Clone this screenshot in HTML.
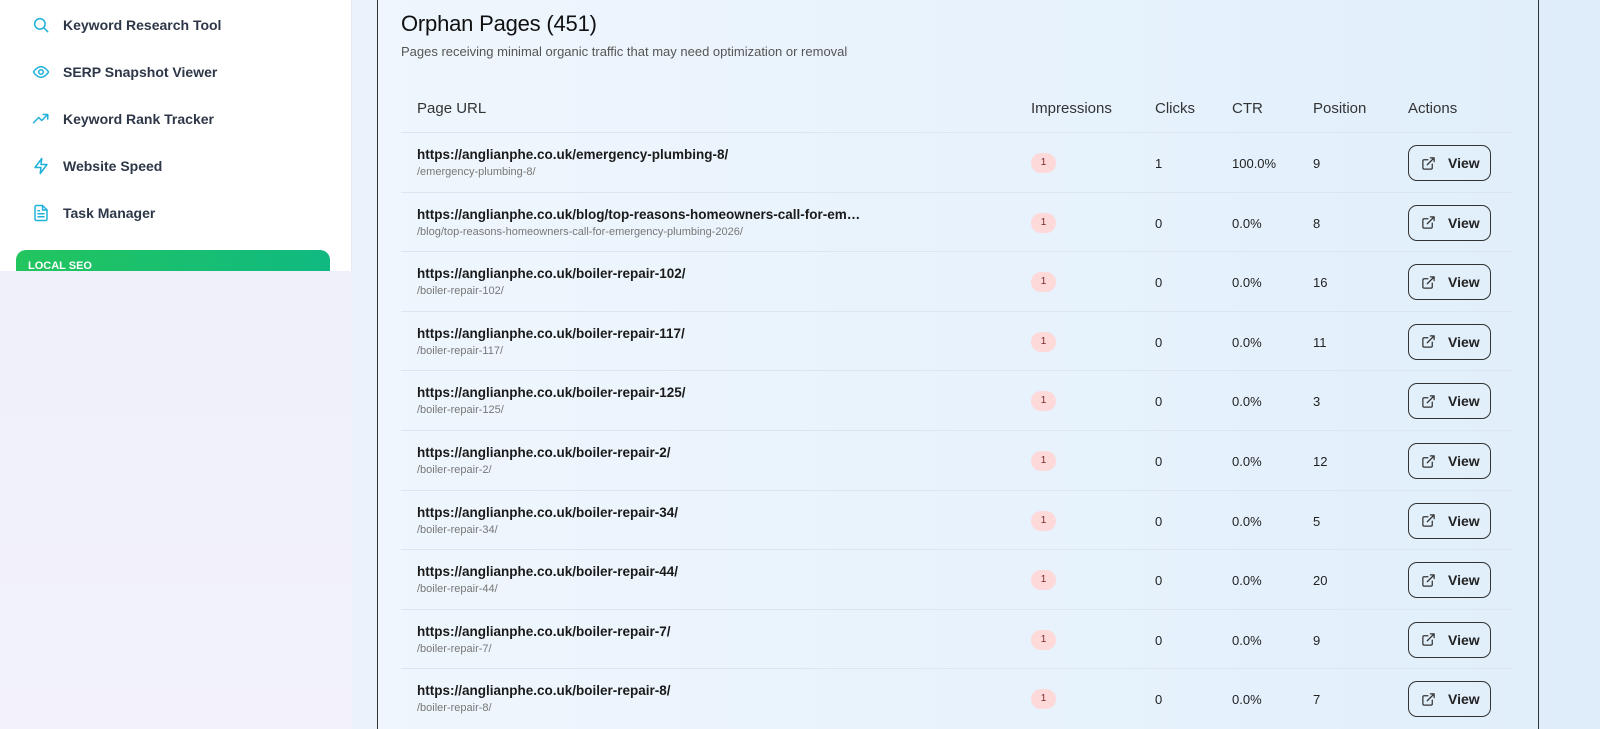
<!DOCTYPE html>
<html><head><style>
*{margin:0;padding:0;box-sizing:border-box}
html,body{width:1600px;height:729px;overflow:hidden}
body{font-family:"Liberation Sans",sans-serif;background:linear-gradient(90deg,#eef4fc,#dfecf9);position:relative}
.side{position:absolute;left:0;top:0;width:352px;height:271px;background:#fff;border-right:1px solid #e6e9f0}
.sideb{position:absolute;left:0;top:271px;width:352px;height:458px;background:linear-gradient(180deg,#eff0fa,#f3f2fa)}
.nav{position:absolute;left:32px;display:flex;align-items:center;gap:13px;font-size:14px;font-weight:bold;color:#2d3748}
.nav svg{width:18px;height:18px;fill:none;stroke:#1fb1d9;stroke-width:2;stroke-linecap:round;stroke-linejoin:round}
.local{position:absolute;left:16px;top:250px;width:314px;height:21px;border-radius:10px 10px 0 0;background:linear-gradient(90deg,#22c55e,#10b981);color:#fff;font-size:11px;font-weight:bold;padding:11px 0 0 12px;overflow:hidden;line-height:10px}
.card{position:absolute;left:377px;top:-5px;width:1162px;height:745px;border:1.5px solid #333;border-top:none;border-bottom:none;background:linear-gradient(90deg,#eff6fd,#e1effb)}
h1{position:absolute;left:401px;top:11px;font-size:22px;font-weight:normal;color:#111;letter-spacing:-.2px}
.sub{position:absolute;left:401px;top:44px;font-size:13px;color:#555}
.th{position:absolute;top:100px;font-size:15px;color:#333}
.hr{position:absolute;left:401px;width:1111px;height:1px;background:#dde6f0}
.url{position:absolute;left:417px;font-size:13.5px;font-weight:bold;color:#1a1a1a}
.path{position:absolute;left:417px;font-size:11px;color:#777}
.badge{position:absolute;left:1031px;width:25px;height:20px;border-radius:10px;background:#fdd9d9;color:#7a2a2a;font-size:10px;text-align:center;line-height:20px}
.c{position:absolute;font-size:13px;color:#222}
.btn{position:absolute;left:1408px;width:83px;height:36px;border:1px solid #333;border-radius:9px;font-size:14px;font-weight:bold;color:#222;display:flex;align-items:center;padding-left:12px;gap:12px}
.btn svg{width:15px;height:15px;fill:none;stroke:#333;stroke-width:2;stroke-linecap:round;stroke-linejoin:round}
</style></head><body>
<div class="side"></div><div class="sideb"></div>
<div class="nav" style="top:16px"><svg viewBox="0 0 24 24"><circle cx="10.5" cy="10.5" r="7"/><path d="M16 16l5 5"/></svg>Keyword Research Tool</div>
<div class="nav" style="top:63px"><svg viewBox="0 0 24 24"><path d="M2 12s4-7 10-7 10 7 10 7-4 7-10 7S2 12 2 12z"/><circle cx="12" cy="12" r="3"/></svg>SERP Snapshot Viewer</div>
<div class="nav" style="top:110px"><svg viewBox="0 0 24 24"><path d="M2 17l7-7 4 4 8-8M15 6h6v6"/></svg>Keyword Rank Tracker</div>
<div class="nav" style="top:157px"><svg viewBox="0 0 24 24"><path d="M13 2L4 14h8l-1 8 9-12h-8z"/></svg>Website Speed</div>
<div class="nav" style="top:204px"><svg viewBox="0 0 24 24"><path d="M14 2H6a2 2 0 0 0-2 2v16a2 2 0 0 0 2 2h12a2 2 0 0 0 2-2V8z"/><path d="M14 2v6h6M8 13h8M8 17h8M8 9h2"/></svg>Task Manager</div>
<div class="local">LOCAL SEO</div>
<div class="card"></div>
<h1>Orphan Pages (451)</h1>
<div class="sub">Pages receiving minimal organic traffic that may need optimization or removal</div>
<div class="th" style="left:417px">Page URL</div>
<div class="th" style="left:1031px">Impressions</div>
<div class="th" style="left:1155px">Clicks</div>
<div class="th" style="left:1232px">CTR</div>
<div class="th" style="left:1313px">Position</div>
<div class="th" style="left:1408px">Actions</div>
<div id="rows"></div>
<script>
var d=[["emergency-plumbing-8/","/emergency-plumbing-8/","1","100.0%","9"],
["blog/top-reasons-homeowners-call-for-em…","/blog/top-reasons-homeowners-call-for-emergency-plumbing-2026/","0","0.0%","8"],
["boiler-repair-102/","/boiler-repair-102/","0","0.0%","16"],
["boiler-repair-117/","/boiler-repair-117/","0","0.0%","11"],
["boiler-repair-125/","/boiler-repair-125/","0","0.0%","3"],
["boiler-repair-2/","/boiler-repair-2/","0","0.0%","12"],
["boiler-repair-34/","/boiler-repair-34/","0","0.0%","5"],
["boiler-repair-44/","/boiler-repair-44/","0","0.0%","20"],
["boiler-repair-7/","/boiler-repair-7/","0","0.0%","9"],
["boiler-repair-8/","/boiler-repair-8/","0","0.0%","7"]];
var h='';
d.forEach(function(r,i){var y=163+i*59.6;
h+='<div class="hr" style="top:'+(y-31)+'px"></div>';
h+='<div class="url" style="top:'+(y-16)+'px">https://anglianphe.co.uk/'+r[0]+'</div>';
h+='<div class="path" style="top:'+(y+3)+'px">'+r[1]+'</div>';
h+='<div class="badge" style="top:'+(y-10)+'px">1</div>';
h+='<div class="c" style="left:1155px;top:'+(y-7)+'px">'+r[2]+'</div>';
h+='<div class="c" style="left:1232px;top:'+(y-7)+'px">'+r[3]+'</div>';
h+='<div class="c" style="left:1313px;top:'+(y-7)+'px">'+r[4]+'</div>';
h+='<div class="btn" style="top:'+(y-18)+'px"><svg viewBox="0 0 24 24"><path d="M18 13v6a2 2 0 0 1-2 2H5a2 2 0 0 1-2-2V8a2 2 0 0 1 2-2h6M15 3h6v6M10 14L21 3"/></svg>View</div>';});
document.getElementById('rows').innerHTML=h;
</script>
</body></html>
